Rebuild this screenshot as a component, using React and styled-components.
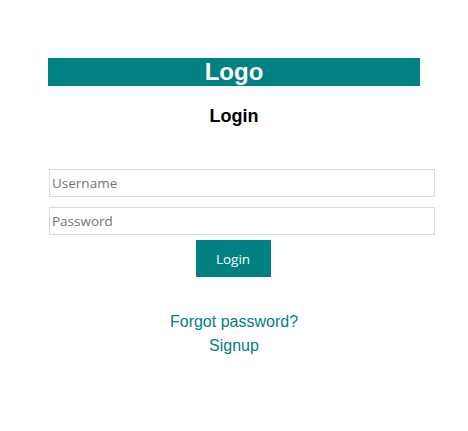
import styled, { createGlobalStyle } from "styled-components";

const GlobalStyle = createGlobalStyle`
  body {
    margin: 0;
    background: #fff;
    font-family: "Liberation Sans", Arial, sans-serif;
  }
`;

const Page = styled.div`
  padding: 58px 48px 0;
`;

const LogoBar = styled.div`
  background: #008080;
  color: #fff;
  height: 28px;
  line-height: 28px;
  text-align: center;
  font-size: 24px;
  font-weight: bold;
`;

const Title = styled.h2`
  margin: 19px 0 42px;
  text-align: center;
  font-size: 18px;
  font-weight: bold;
  line-height: 22px;
  color: #000;
`;

const Form = styled.form`
  display: flex;
  flex-direction: column;
  align-items: center;
`;

const Input = styled.input`
  box-sizing: content-box;
  align-self: stretch;
  width: 100%;
  height: 26px;
  margin: 0 0 10px 1px;
  padding: 0 10px 0 2px;
  border: 1px solid #dcdcdc;
  font-family: "Open Sans", "Noto Sans", sans-serif;
  font-size: 13.5px;
  color: #333;
  outline: none;

  &::placeholder {
    color: #757575;
  }
`;

const Button = styled.button`
  margin: -5px 2px 0 0;
  width: 75px;
  height: 37px;
  border: none;
  background: #008080;
  color: #fff;
  font-family: "Open Sans", "Noto Sans", sans-serif;
  font-size: 13.5px;
  cursor: pointer;
`;

const Links = styled.div`
  margin-top: 35px;
  display: flex;
  flex-direction: column;
  align-items: center;
  gap: 4px;
`;

const Link = styled.a`
  color: #008080;
  font-size: 16px;
  line-height: 20px;
  text-decoration: none;
`;

export default function App() {
  return (
    <>
      <GlobalStyle />
      <Page>
        <LogoBar>Logo</LogoBar>
        <Title>Login</Title>
        <Form onSubmit={(e) => e.preventDefault()}>
          <Input type="text" placeholder="Username" />
          <Input type="password" placeholder="Password" />
          <Button type="submit">Login</Button>
        </Form>
        <Links>
          <Link href="#">Forgot password?</Link>
          <Link href="#">Signup</Link>
        </Links>
      </Page>
    </>
  );
}
